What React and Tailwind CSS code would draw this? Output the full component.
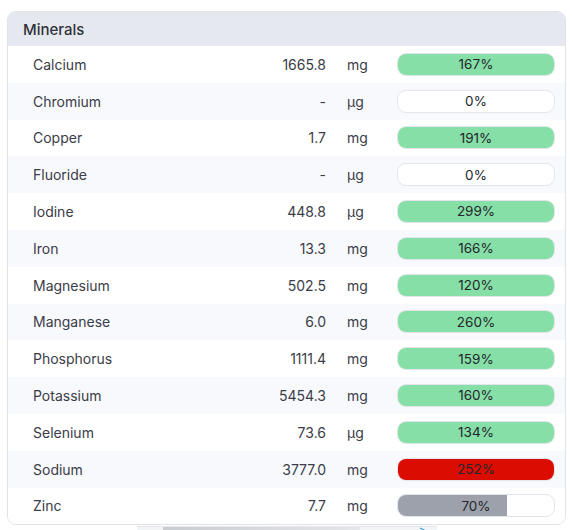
import React from "react"

const minerals = [
  { name: "Calcium", value: "1665.8", unit: "mg", pct: 167 },
  { name: "Chromium", value: "-", unit: "µg", pct: 0 },
  { name: "Copper", value: "1.7", unit: "mg", pct: 191 },
  { name: "Fluoride", value: "-", unit: "µg", pct: 0 },
  { name: "Iodine", value: "448.8", unit: "µg", pct: 299 },
  { name: "Iron", value: "13.3", unit: "mg", pct: 166 },
  { name: "Magnesium", value: "502.5", unit: "mg", pct: 120 },
  { name: "Manganese", value: "6.0", unit: "mg", pct: 260 },
  { name: "Phosphorus", value: "1111.4", unit: "mg", pct: 159 },
  { name: "Potassium", value: "5454.3", unit: "mg", pct: 160 },
  { name: "Selenium", value: "73.6", unit: "µg", pct: 134 },
  { name: "Sodium", value: "3777.0", unit: "mg", pct: 252, over: true },
  { name: "Zinc", value: "7.7", unit: "mg", pct: 70 },
]

function Bar({ pct, over }) {
  // fill colour: red when over the limit, gray under 100%, green otherwise
  let fill = "bg-[#86dfa6]"
  if (over) fill = "bg-[#db0d02]"
  else if (pct < 100) fill = "bg-[#9da1ac]"

  const width = Math.min(pct, 100)

  return (
    <div className="relative w-[158px] h-[23px] rounded-[9px] border border-[#e3e5ec] bg-white overflow-hidden">
      {width > 0 && (
        <div className={`absolute left-0 top-0 h-full ${fill}`} style={{ width: `${width}%` }} />
      )}
      <span className="relative flex h-full items-center justify-center text-[13.5px] text-[#24262d]">
        {pct}%
      </span>
    </div>
  )
}

export default function App() {
  return (
    <div className="w-full min-h-screen bg-white pt-[11px] font-['Inter',sans-serif] text-[#3a3c47]">
      <div className="mx-[7px] rounded-[9px] border border-[#dfe2e9] overflow-hidden bg-white">
        <div className="h-[34px] flex items-center pt-[2px] px-[15px] bg-[#e5e8ef] text-[15px] font-medium text-[#30323b]">
          Minerals
        </div>

        {minerals.map((m, i) => (
          <div
            key={m.name}
            className={`h-[36.8px] flex items-center pl-[25px] pr-[10px] text-[14px] ${i % 2 ? "bg-[#f8f9fd]" : "bg-white"}`}
          >
            <span className="flex-1">{m.name}</span>
            <span className="w-[100px] text-right">{m.value}</span>
            <span className="ml-[21px] w-[50px]">{m.unit}</span>
            <Bar pct={m.pct} over={m.over} />
          </div>
        ))}
      </div>

      {/* ad strip peeking in at the bottom */}
      <div className="mx-auto mt-[1px] w-[300px] h-[6px] border-t border-[#e5e7eb] bg-[#f3f4f6] flex">
        <div className="ml-[26px] w-[197px] h-full bg-gradient-to-r from-[#c9ccd2] to-[#e4e6ea]" />
        <svg className="ml-auto mr-[10px]" width="8" height="6" viewBox="0 0 8 6">
          <path d="M1 1 L7 4 L1 7" fill="none" stroke="#3b9bd6" strokeWidth="1.2" />
        </svg>
      </div>
    </div>
  )
}
